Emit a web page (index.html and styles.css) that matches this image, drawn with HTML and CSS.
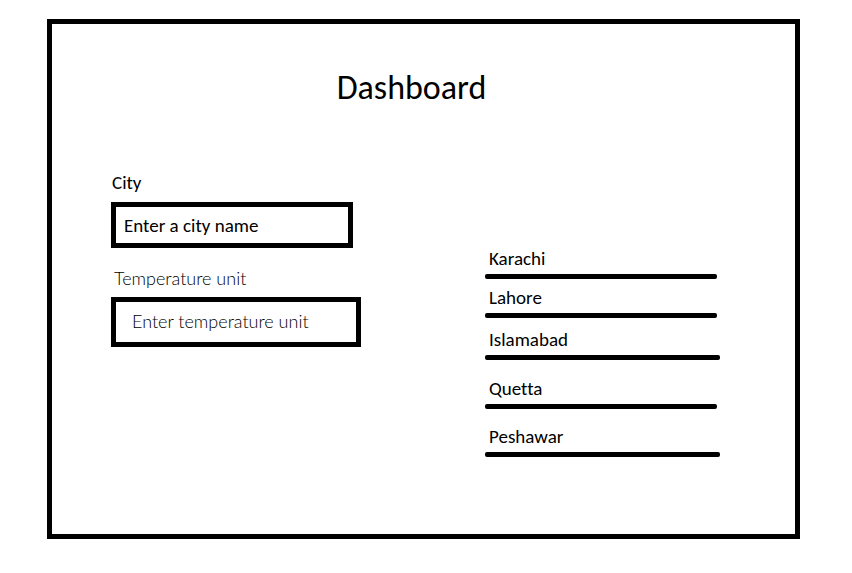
FILE: index.html
```html
<!DOCTYPE html>
<html lang="en">
<head>
<meta charset="utf-8">
<meta name="viewport" content="width=device-width, initial-scale=1">
<title>Dashboard</title>
<link rel="stylesheet" href="styles.css">
</head>
<body>
<main class="frame">
  <h1 class="title">Dashboard</h1>
  <div class="columns">
    <form class="form">
      <label class="label" for="city">City</label>
      <input class="field" id="city" type="text" placeholder="Enter a city name">
      <label class="label label-light" for="unit">Temperature unit</label>
      <input class="field field-large" id="unit" type="text" placeholder="Enter temperature unit">
    </form>
    <ul class="cities">
      <li class="city">Karachi</li>
      <li class="city">Lahore</li>
      <li class="city city-wide">Islamabad</li>
      <li class="city">Quetta</li>
      <li class="city city-wide">Peshawar</li>
    </ul>
  </div>
</main>
</body>
</html>
```
FILE: styles.css
```css
* {
  box-sizing: border-box;
}

body {
  margin: 0;
  padding: 19px 52px 34px 47px;
  min-height: 100vh;
  display: flex;
  background: #fff;
  color: #000;
  font: 19px/22px Carlito, Lato, sans-serif;
  font-variant-ligatures: none;
}

.frame {
  flex: 1;
  border: 5px solid #000;
  padding: 44px 75px 40px 59px;
}

.title {
  margin: 0 0 64px;
  padding-right: 8px;
  font-size: 34px;
  line-height: 40px;
  font-weight: 400;
  text-align: center;
}

.columns {
  display: flex;
  justify-content: space-between;
  align-items: flex-start;
}

.form {
  display: flex;
  flex-direction: column;
  align-items: flex-start;
  width: 250px;
}

.label {
  padding-left: 1px;
  margin-bottom: 8px;
}

.label-light {
  padding-left: 3px;
  font-family: Lato, sans-serif;
  font-size: 18px;
  font-weight: 300;
}

.field {
  width: 242px;
  height: 46px;
  margin: 0 0 19px;
  padding: 0 8px;
  border: 5px solid #000;
  border-radius: 0;
  background: #fff;
  color: #000;
  font: inherit;
}

.field-large {
  width: 100%;
  height: 50px;
  margin: 0;
  padding: 0 16px 2px;
  font-family: Lato, sans-serif;
  font-size: 18px;
  font-weight: 300;
}

.field::placeholder {
  color: #000;
  opacity: 1;
}

.cities {
  display: grid;
  grid-template-rows: 32px 39px 42px 49px 48px;
  width: 235px;
  margin: 75px 0 0;
  padding: 0;
  list-style: none;
}

.city {
  display: flex;
  flex-direction: column;
  justify-content: flex-end;
  width: 232px;
  padding-left: 4px;
}

.city::after {
  content: "";
  height: 5px;
  margin: 4px 0 0 -4px;
  border-radius: 2px;
  background: #000;
}

.city-wide {
  width: 235px;
}
```
